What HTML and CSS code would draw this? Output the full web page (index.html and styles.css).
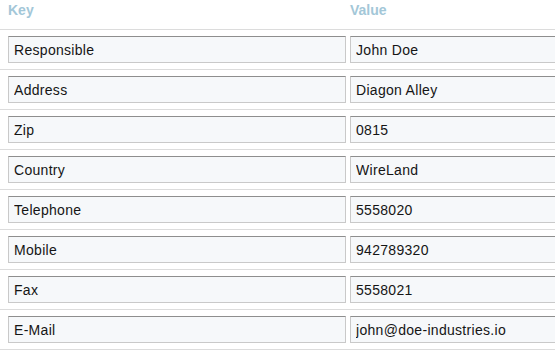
FILE: index.html
```html
<!DOCTYPE html>
<html lang="en">
<head>
<meta charset="utf-8">
<title>Key / Value</title>
<link rel="stylesheet" href="styles.css">
</head>
<body>
<div class="kv">
  <div class="kv-head">
    <div class="kv-th">Key</div>
    <div class="kv-th">Value</div>
  </div>
  <div class="kv-row"><input class="kv-input" type="text" value="Responsible"><input class="kv-input kv-value" type="text" value="John Doe"></div>
  <div class="kv-row"><input class="kv-input" type="text" value="Address"><input class="kv-input kv-value" type="text" value="Diagon Alley"></div>
  <div class="kv-row"><input class="kv-input" type="text" value="Zip"><input class="kv-input kv-value" type="text" value="0815"></div>
  <div class="kv-row"><input class="kv-input" type="text" value="Country"><input class="kv-input kv-value" type="text" value="WireLand"></div>
  <div class="kv-row"><input class="kv-input" type="text" value="Telephone"><input class="kv-input kv-value" type="text" value="5558020"></div>
  <div class="kv-row"><input class="kv-input" type="text" value="Mobile"><input class="kv-input kv-value" type="text" value="942789320"></div>
  <div class="kv-row"><input class="kv-input" type="text" value="Fax"><input class="kv-input kv-value" type="text" value="5558021"></div>
  <div class="kv-row"><input class="kv-input" type="text" value="E-Mail"><input class="kv-input kv-value" type="text" value="john@doe-industries.io"></div>
</div>
</body>
</html>
```

FILE: styles.css
```css
html, body {
  margin: 0;
  padding: 0;
  background: #ffffff;
}

body {
  font-family: "Liberation Sans", Arial, sans-serif;
  font-size: 14px;
  color: #222222;
}

.kv {
  width: 100%;
  border-bottom: 1px solid #dcdcdc;
}

.kv-head {
  display: grid;
  grid-template-columns: 338px 1fr;
  column-gap: 4px;
  height: 29px;
  box-sizing: border-box;
  padding: 2px 0 0 8px;
}

.kv-th {
  font-weight: bold;
  font-size: 14px;
  line-height: 16px;
  color: #a3c7d8;
}

.kv-row {
  display: grid;
  grid-template-columns: 338px 1fr;
  column-gap: 4px;
  padding: 6px 0 6px 8px;
  border-top: 1px solid #dcdcdc;
  overflow: hidden;
}

.kv-input {
  display: block;
  box-sizing: border-box;
  width: 100%;
  height: 27px;
  margin: 0;
  padding: 1px 5px 0;
  font-family: "Liberation Sans", Arial, sans-serif;
  font-size: 14px;
  letter-spacing: 0.3px;
  color: #151515;
  background: #f6f8fa;
  border: 1px solid #c9c9c9;
  border-top-color: #8e8e8e;
  border-radius: 0;
  outline: none;
}

.kv-value {
  width: calc(100% + 40px);
}
```
